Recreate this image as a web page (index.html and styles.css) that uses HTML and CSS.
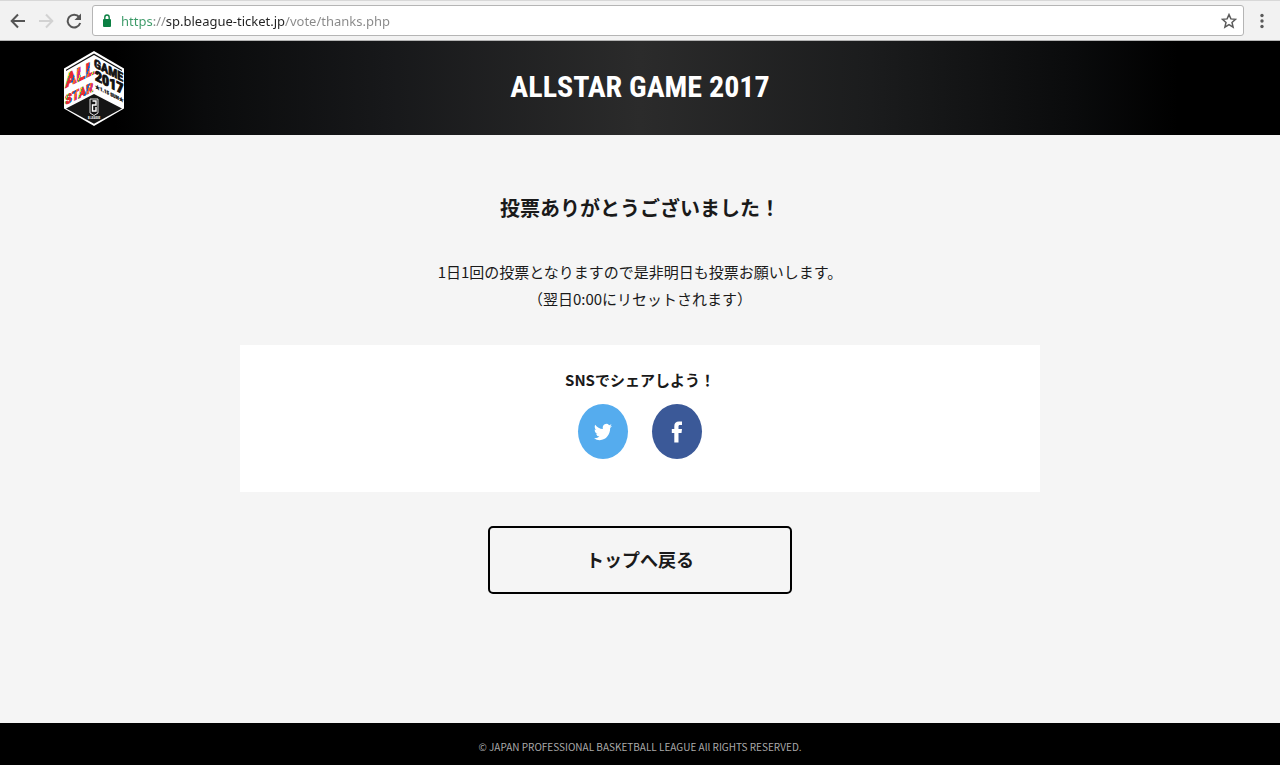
FILE: index.html
```html
<!DOCTYPE html>
<html lang="ja">
<head>
  <meta charset="UTF-8">
  <meta name="viewport" content="width=device-width, initial-scale=1.0">
  <title>ALLSTAR GAME 2017</title>
  <link rel="stylesheet" href="styles.css">
</head>
<body>
  <!-- Browser toolbar -->
  <div class="toolbar">
    <button class="tool-button" type="button" aria-label="Back">
      <svg width="16" height="16" viewBox="0 0 16 16" fill="none" stroke="#555" stroke-width="2"><path d="M15 8H2M8 1.500L1.700 8L8 14.500"/></svg>
    </button>
    <button class="tool-button" type="button" aria-label="Forward" disabled>
      <svg width="16" height="16" viewBox="0 0 16 16" fill="none" stroke="#d2d2d2" stroke-width="2"><path d="M1 8H14M8 1.500L14.300 8L8 14.500"/></svg>
    </button>
    <button class="tool-button" type="button" aria-label="Reload">
      <svg width="16" height="16" viewBox="0 0 16 16"><path d="M13.200 4.200A6.400 6.400 0 1 0 14.200 10" fill="none" stroke="#555" stroke-width="2"/><path d="M15 .5V7H8.500z" fill="#555"/></svg>
    </button>
    <div class="address-bar">
      <svg class="lock" width="8" height="13" viewBox="0 0 8 13"><path d="M1.800 6V3.400a2.200 2.400 0 0 1 4.400 0V6" fill="none" stroke="#0b8043" stroke-width="1.400"/><rect y="5" width="8" height="8" rx="1" fill="#0b8043"/></svg>
      <input class="url" type="text" aria-label="Address" value="https://sp.bleague-ticket.jp/vote/thanks.php" spellcheck="false">
      <button class="star-button" type="button" aria-label="Bookmark">
        <svg width="16" height="16" viewBox="0 0 16 16" fill="none" stroke="#5a5a5a" stroke-width="1.500"><path d="M8 1.600L9.900 5.900L14.500 6.300L11 9.400L12.100 14.200L8 11.700L3.900 14.200L5 9.400L1.500 6.300L6.100 5.900Z"/></svg>
      </button>
    </div>
    <button class="menu-button" type="button" aria-label="Menu">
      <svg width="4" height="16" viewBox="0 0 4 16" fill="#5a5a5a"><circle cx="2" cy="2.500" r="1.700"/><circle cx="2" cy="8" r="1.700"/><circle cx="2" cy="13.500" r="1.700"/></svg>
    </button>
  </div>

  <header class="header">
    <a class="logo" href="#" aria-label="ALLSTAR GAME 2017">
      <svg width="62" height="76" viewBox="0 0 62 76">
        <defs>
          <linearGradient id="confetti" x1="0" y1="0" x2="12" y2="5" gradientUnits="userSpaceOnUse" spreadMethod="repeat">
            <stop offset="0" stop-color="#e52a2f"/><stop offset=".35" stop-color="#e52a2f"/>
            <stop offset=".35" stop-color="#2260b4"/><stop offset=".5" stop-color="#2260b4"/>
            <stop offset=".5" stop-color="#ef6a24"/><stop offset=".65" stop-color="#ef6a24"/>
            <stop offset=".65" stop-color="#d92b73"/><stop offset=".85" stop-color="#d92b73"/>
            <stop offset=".85" stop-color="#f0cf28"/><stop offset=".93" stop-color="#f0cf28"/>
            <stop offset=".93" stop-color="#3aa35c"/><stop offset="1" stop-color="#3aa35c"/>
          </linearGradient>
        </defs>
        <path d="M31 0L61 17.500V57.500L31 75L1 57.500V17.500Z" fill="#fff"/>
        <path d="M31 2.500L59 18.700V20L31 4L3 20V18.700Z" fill="#111"/>
        <path d="M31 43L59 57.500L31 72.800L3 57.500Z" fill="#151515"/>
        <g class="logo-text">
          <text font-size="19" fill="url(#confetti)" stroke="url(#confetti)" stroke-width=".9" transform="translate(2 37) skewY(-26)">ALL</text>
          <text font-size="13" fill="url(#confetti)" stroke="url(#confetti)" stroke-width=".9" transform="translate(2 54) skewY(-26)">STAR</text>
          <text font-size="12" fill="#111" stroke="#111" stroke-width=".7" transform="translate(31 16) skewY(27)">GAME</text>
          <text font-size="14" fill="#111" stroke="#111" stroke-width="1" transform="translate(32 29) skewY(27)">2017</text>
          <text font-size="5" fill="#111" stroke="#111" stroke-width=".3" transform="translate(32 37) skewY(27)">★1.15 SUN★</text>
          <text font-size="3" fill="#fff" x="25" y="68">B.LEAGUE</text>
        </g>
        <path d="M27 48H35V62L31 64.500L27 62Z" fill="none" stroke="#ddd"/>
        <path d="M29.500 50H33V54H29.500V60H33V56M29.500 54V60" fill="none" stroke="#fff" stroke-width="1.400"/>
      </svg>
    </a>
    <h1 class="header-title">ALLSTAR GAME 2017</h1>
  </header>

  <main class="main">
    <h2 class="thanks">投票ありがとうございました！</h2>
    <p class="message">1日1回の投票となりますので是非明日も投票お願いします。<br>（翌日0:00にリセットされます）</p>

    <section class="share">
      <h3 class="share-title">SNSでシェアしよう！</h3>
      <div class="share-links">
        <a class="share-link twitter" href="#" aria-label="Twitter">
          <svg width="18" height="20" viewBox="0 0 24 24" preserveAspectRatio="none" fill="#fff"><path d="M23.950 4.570a10 10 0 0 1-2.820.77 4.960 4.960 0 0 0 2.160-2.720c-.95.550-2 .95-3.130 1.180a4.920 4.920 0 0 0-8.380 4.480C7.690 8.090 4.070 6.130 1.640 3.160a4.820 4.820 0 0 0-.67 2.480c0 1.710.87 3.210 2.190 4.100a4.900 4.900 0 0 1-2.230-.62v.06a4.920 4.920 0 0 0 3.950 4.830 5 5 0 0 1-2.210.08 4.940 4.940 0 0 0 4.600 3.420A9.870 9.870 0 0 1 0 19.540a13.990 13.990 0 0 0 7.550 2.210c9.050 0 14-7.500 14-13.980 0-.21 0-.42-.02-.63a9.940 9.940 0 0 0 2.460-2.550z"/></svg>
        </a>
        <a class="share-link facebook" href="#" aria-label="Facebook">
          <svg width="12" height="22" viewBox="0 0 12 22" fill="#fff"><path d="M3.300 21.500V12H.8V8H3.300V5.200C3.300 2 5 .5 7.900.5H11V4H9C7.800 4 7.500 4.600 7.500 5.600V8H11L10.500 12H7.500V21.500Z"/></svg>
        </a>
      </div>
    </section>

    <a class="back-link" href="#">トップへ戻る</a>
  </main>

  <footer class="footer">© JAPAN PROFESSIONAL BASKETBALL LEAGUE All RIGHTS RESERVED.</footer>
</body>
</html>
```
FILE: styles.css
```css
* {
  box-sizing: border-box;
}
body {
  margin: 0;
  min-height: 100vh;
  display: flex;
  flex-direction: column;
  font-family: 'Noto Sans CJK JP', sans-serif;
  background: #f5f5f5;
  color: #1a1a1a;
}
h1, h2, h3, p {
  margin: 0;
}
button {
  border: 0;
  padding: 0;
  background: none;
  display: flex;
}

/* Browser toolbar */
.toolbar {
  display: flex;
  align-items: center;
  gap: 12px;
  height: 41px;
  padding: 0 16px 0 10px;
  background: #f2f2f2;
  border-top: 1px solid #d8d8d8;
  border-bottom: 1px solid #b4b4b4;
}
.address-bar {
  flex: 1;
  display: flex;
  align-items: center;
  height: 31px;
  margin-right: 4px;
  margin-left: -2px;
  padding: 0 6px 0 10px;
  background: #fff;
  border: 1px solid #b5b5b5;
  border-radius: 3px;
}
.url {
  flex: 1;
  min-width: 0;
  margin-left: 10px;
  padding: 0;
  border: 0;
  outline: none;
  font-family: 'Noto Sans', sans-serif;
  font-size: 13px;
  line-height: 24px;
  color: transparent;
  background: linear-gradient(90deg, #3c9a68 33px, #888 33px, #888 45px, #222 45px, #222 164px, #888 164px);
  -webkit-background-clip: text;
  background-clip: text;
}

/* Header */
.header {
  display: grid;
  grid-template-columns: 1fr auto 1fr;
  align-items: center;
  height: 94px;
  background: linear-gradient(90deg, #000 9%, #0a0b0c 16%, #17181a 30%, #2b2b2b 50%, #1b1c1d 68%, #0a0b0c 84%, #000 92%);
}
.logo {
  display: flex;
  padding-top: 2px;
  padding-left: 63px;
}
.header-title {
  padding-bottom: 2px;
  font-family: 'Roboto Condensed', 'Noto Sans CJK JP', sans-serif;
  font-size: 30px;
  line-height: 40px;
  font-weight: 700;
  color: #fff;
}
.logo-text {
  font-family: 'Roboto Condensed', 'Noto Sans CJK JP', sans-serif;
  font-weight: 700;
}

/* Content */
.main {
  flex: 1;
  display: flex;
  flex-direction: column;
  align-items: center;
  padding: 55px 20px;
  text-align: center;
}
.thanks {
  font-size: 20px;
  line-height: 36px;
  font-weight: 700;
}
.message {
  margin-top: 32px;
  font-size: 15px;
  line-height: 27px;
}
.share {
  width: 100%;
  max-width: 800px;
  margin-top: 33px;
  padding: 21px 20px 33px;
  background: #fff;
}
.share-title {
  font-size: 15px;
  line-height: 27px;
  font-weight: 700;
}
.share-links {
  display: flex;
  justify-content: center;
  gap: 24px;
  margin-top: 11px;
}
.share-link {
  display: flex;
  align-items: center;
  justify-content: center;
  width: 50px;
  height: 55px;
  border-radius: 50%;
}
.twitter {
  background: #55acee;
}
.facebook {
  background: #3b5998;
}
.back-link {
  width: 100%;
  max-width: 304px;
  margin-top: 34px;
  padding: 15px 16px 17px;
  border: 2px solid #000;
  border-radius: 5px;
  font-size: 18px;
  line-height: 32px;
  font-weight: 700;
  color: #1a1a1a;
  text-decoration: none;
}

.footer {
  padding: 15px 20px 9px;
  background: #000;
  color: #aaa;
  font-size: 10px;
  line-height: 18px;
  text-align: center;
}
```
